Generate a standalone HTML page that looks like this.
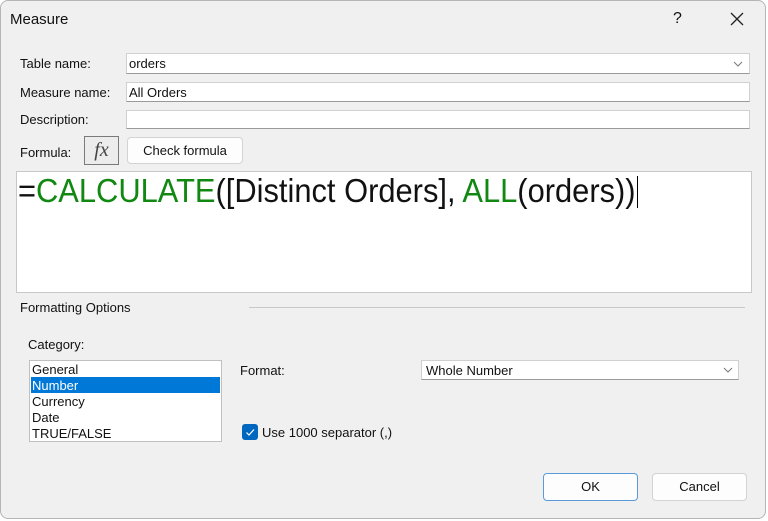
<!DOCTYPE html>
<html><head><style>
*{margin:0;padding:0;box-sizing:border-box}
body{width:768px;height:521px;background:#fff;font-family:"Liberation Sans",sans-serif;font-size:13px;color:#111;position:relative;overflow:hidden}
.dlg{position:absolute;left:0;top:0;width:766px;height:519px;background:#f0f0f0;border:1px solid #b5b5b5;border-radius:8px}
.a{position:absolute;white-space:nowrap}
.box{position:absolute;background:#fff;border:1px solid #d0d0d0;border-bottom-color:#9a9a9a}
.btn{position:absolute;background:#fdfdfd;border:1px solid #d3d3d3;border-radius:4px;text-align:center;font-size:13px}
</style></head><body>
<div class="dlg"></div>
<div class="a" style="left:10px;top:11px;font-size:15px">Measure</div>
<div class="a" style="left:673px;top:10px;font-size:16px">?</div>
<svg class="a" style="left:729px;top:11px" width="16" height="16"><path d="M2 2L14 14M14 2L2 14" stroke="#222" stroke-width="1.3"/></svg>

<div class="a" style="left:20px;top:56px">Table name:</div>
<div class="box" style="left:126px;top:53px;width:624px;height:21px"></div>
<div class="a" style="left:129px;top:56px">orders</div>
<svg class="a" style="left:733px;top:61px" width="10" height="6"><path d="M1 1L5 5L9 1" stroke="#777" fill="none"/></svg>

<div class="a" style="left:20px;top:85px">Measure name:</div>
<div class="box" style="left:126px;top:82px;width:624px;height:20px"></div>
<div class="a" style="left:129px;top:85px">All Orders</div>

<div class="a" style="left:20px;top:112px">Description:</div>
<div class="box" style="left:126px;top:110px;width:624px;height:19px"></div>

<div class="a" style="left:20px;top:145px">Formula:</div>
<div class="a" style="left:84px;top:136px;width:35px;height:29px;border:1px solid #7a7a7a;background:#ececec;font-family:'Liberation Serif',serif;font-style:italic;font-size:20px;text-align:center;line-height:26px;color:#444">fx</div>
<div class="btn" style="left:127px;top:137px;width:116px;height:27px;line-height:25px">Check formula</div>

<div class="box" style="left:16px;top:171px;width:736px;height:122px;border-color:#c8c8c8"></div>
<div class="a" style="left:18px;top:172px;font-size:33px;line-height:38px;transform:scaleX(0.935);transform-origin:0 0">=<span style="color:#118811">CALCULATE</span>([Distinct Orders], <span style="color:#118811">ALL</span>(orders))</div>
<div class="a" style="left:637px;top:176px;width:1px;height:32px;background:#000"></div>

<div class="a" style="left:20px;top:300px">Formatting Options</div>
<div class="a" style="left:249px;top:307px;width:496px;height:1px;background:#c8c8c8"></div>

<div class="a" style="left:28px;top:337px">Category:</div>
<div class="box" style="left:29px;top:360px;width:193px;height:82px;border-color:#c0c0c0"></div>
<div class="a" style="left:31px;top:377px;width:189px;height:16px;background:#0078d7"></div>
<div class="a" style="left:32px;top:362px;line-height:16px">General<br><span style="color:#fff">Number</span><br>Currency<br>Date<br>TRUE/FALSE</div>

<div class="a" style="left:240px;top:363px">Format:</div>
<div class="box" style="left:421px;top:360px;width:318px;height:20px"></div>
<div class="a" style="left:426px;top:363px">Whole Number</div>
<svg class="a" style="left:723px;top:367px" width="10" height="6"><path d="M1 1L5 5L9 1" stroke="#777" fill="none"/></svg>

<div class="a" style="left:242px;top:424px;width:16px;height:16px;background:#0067c0;border-radius:3px"></div>
<svg class="a" style="left:244px;top:426px" width="12" height="12"><path d="M2.5 6.5L5 9L10 3.5" stroke="#fff" stroke-width="1.2" fill="none"/></svg>
<div class="a" style="left:262px;top:425px">Use 1000 separator (,)</div>

<div class="btn" style="left:543px;top:473px;width:95px;height:28px;line-height:26px;border-color:#5a9ad8">OK</div>
<div class="btn" style="left:652px;top:473px;width:95px;height:28px;line-height:26px">Cancel</div>
</body></html>
